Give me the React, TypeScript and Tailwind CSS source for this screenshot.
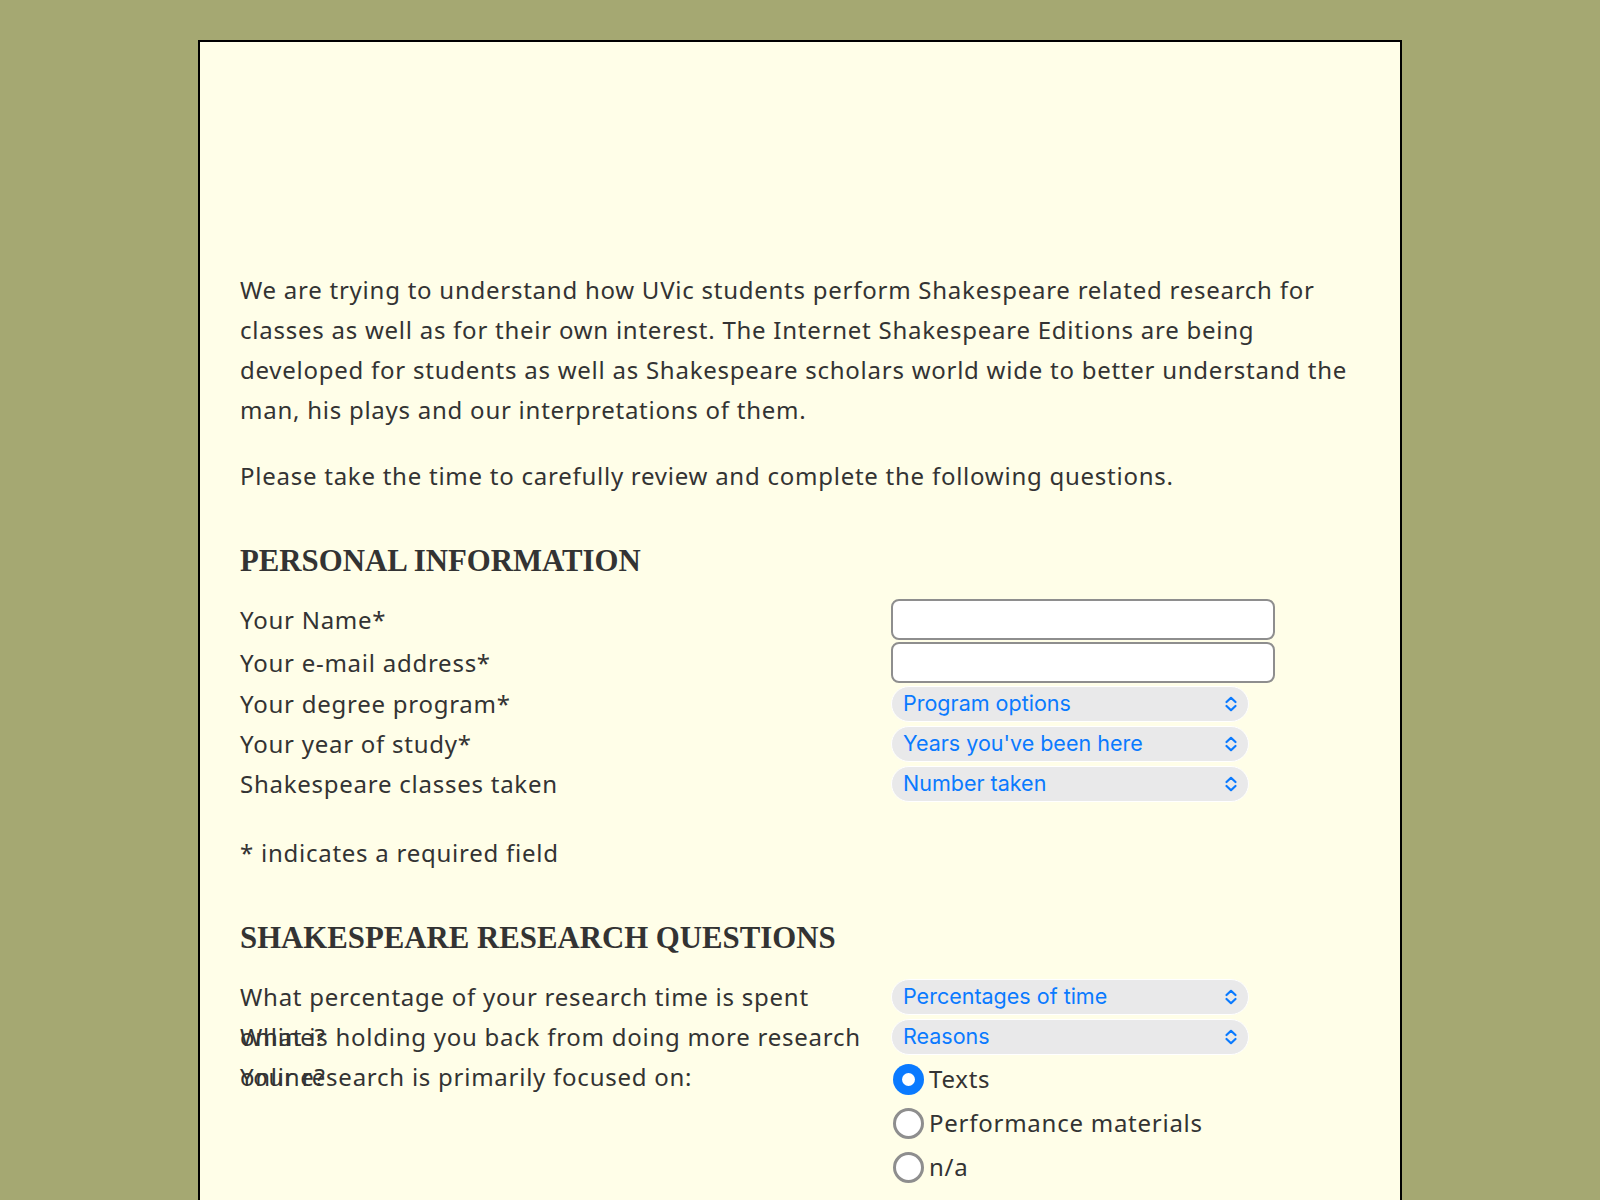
import React from 'react';

const body = { fontFamily: '"Noto Sans", "Open Sans", sans-serif' };
const serif = { fontFamily: '"Liberation Serif", "DejaVu Serif", serif' };
const ui = { fontFamily: 'Inter, "Noto Sans", sans-serif' };

function Chevrons() {
  return (
    <svg width="16" height="18" viewBox="0 0 16 18" fill="none" stroke="#0a7aff" strokeWidth="2.2" strokeLinecap="round" strokeLinejoin="round">
      <path d="M3.5 7 L8 2.8 L12.5 7" />
      <path d="M3.5 11 L8 15.2 L12.5 11" />
    </svg>
  );
}

function Select({ label }: { label: string }) {
  return (
    <div
      className="flex h-[36px] w-[358px] items-center justify-between rounded-full border border-white bg-[#e9e9ea] pl-[11px] pr-[9px] text-[21.5px] tracking-normal text-[#0a7aff]"
      style={ui}
    >
      <span className="leading-none">{label}</span>
      <Chevrons />
    </div>
  );
}

function TextInput() {
  return <input type="text" className="h-[41px] w-[384px] rounded-[8px] border-2 border-[#8e8e8e] bg-white px-2 outline-none" />;
}

function Row({ label, tall, children }: { label: string; tall?: boolean; children: React.ReactNode }) {
  return (
    <div className={`flex ${tall ? 'h-[43px]' : 'h-[40px]'} items-center`}>
      <div className="w-[630px] shrink-0 leading-[40px]">{label}</div>
      <div className="ml-[21px]">{children}</div>
    </div>
  );
}

function TopRow({ label, children }: { label: string; children: React.ReactNode }) {
  // label wraps and spills into the next row, as in the original page
  return (
    <div className="flex h-[40px] items-start">
      <div className="w-[630px] shrink-0 leading-[40px]">{label}</div>
      <div className="ml-[21px] mt-[2px]">{children}</div>
    </div>
  );
}

function Radio({ label, checked }: { label: string; checked?: boolean }) {
  return (
    <label className="flex h-[44px] items-center">
      {checked ? (
        <span className="flex h-[31px] w-[31px] items-center justify-center rounded-full bg-[#0a7aff]">
          <span className="h-[13px] w-[13px] rounded-full bg-white" />
        </span>
      ) : (
        <span className="h-[31px] w-[31px] rounded-full border-[3px] border-[#8e8e8e] bg-white" />
      )}
      <span className="ml-[5px]">{label}</span>
    </label>
  );
}

export default function App() {
  return (
    <div className="min-h-[1200px] bg-[#a5a872] pt-[40px]">
      <div className="mx-auto min-h-[1200px] w-[1204px] border-2 border-black bg-[#fffee8] px-[40px] text-[24px] tracking-[0.75px] text-[#333333]" style={body}>
        <div className="h-[228px]" />
        <p className="leading-[40px]">
          We are trying to understand how UVic students perform Shakespeare related research for classes as well as for their own interest. The Internet Shakespeare Editions are being developed for students as well as Shakespeare scholars world wide to better understand the man, his plays and our interpretations of them.
        </p>
        <p className="mt-[26px] leading-[40px]">Please take the time to carefully review and complete the following questions.</p>

        <h2 className="mt-[45px] text-[30.8px] font-bold leading-[40px] tracking-normal" style={serif}>PERSONAL INFORMATION</h2>
        <div className="mt-[17px]">
          <Row label="Your Name*" tall><TextInput /></Row>
          <Row label="Your e-mail address*" tall><TextInput /></Row>
          <Row label="Your degree program*"><Select label="Program options" /></Row>
          <Row label="Your year of study*"><Select label="Years you've been here" /></Row>
          <Row label="Shakespeare classes taken"><Select label="Number taken" /></Row>
        </div>
        <p className="mt-[29px] leading-[40px]">* indicates a required field</p>

        <h2 className="mt-[45px] text-[30.8px] font-bold leading-[40px] tracking-normal" style={serif}>SHAKESPEARE RESEARCH QUESTIONS</h2>
        <div className="mt-[19px] pb-[40px]">
          <TopRow label="What percentage of your research time is spent online?"><Select label="Percentages of time" /></TopRow>
          <TopRow label="What is holding you back from doing more research online?"><Select label="Reasons" /></TopRow>
          <div className="flex items-start">
            <div className="w-[630px] shrink-0 leading-[40px]">Your research is primarily focused on:</div>
            <div className="ml-[23px] flex flex-col">
              <Radio label="Texts" checked />
              <Radio label="Performance materials" />
              <Radio label="n/a" />
            </div>
          </div>
        </div>
      </div>
    </div>
  );
}
